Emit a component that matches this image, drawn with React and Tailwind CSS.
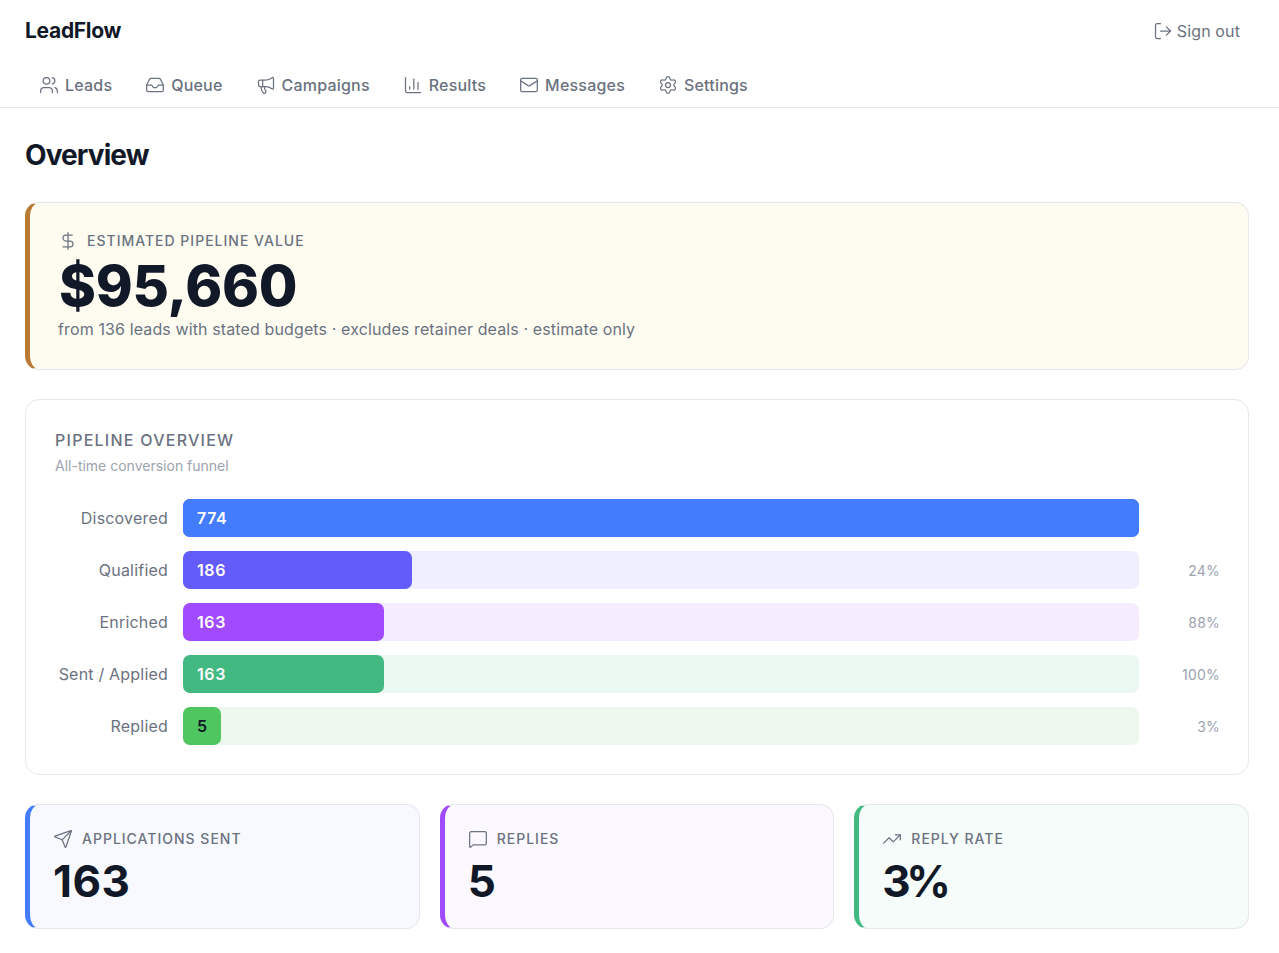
import { Users, Inbox, Megaphone, ChartColumn, Mail, Settings, LogOut, DollarSign, Send, MessageSquare, TrendingUp } from 'lucide-react'

const navItems = [
  { label: 'Leads', icon: Users },
  { label: 'Queue', icon: Inbox },
  { label: 'Campaigns', icon: Megaphone },
  { label: 'Results', icon: ChartColumn },
  { label: 'Messages', icon: Mail },
  { label: 'Settings', icon: Settings },
]

const funnel = [
  { label: 'Discovered', value: 774, width: '100%', pct: '', bar: 'bg-[#447cfe]', track: 'bg-[#447cfe]', text: 'text-white' },
  { label: 'Qualified', value: 186, width: '24%', pct: '24%', bar: 'bg-[#635bfa]', track: 'bg-[#f0effd]', text: 'text-white' },
  { label: 'Enriched', value: 163, width: '21.06%', pct: '88%', bar: 'bg-[#a04bff]', track: 'bg-[#f5ecfe]', text: 'text-white' },
  { label: 'Sent / Applied', value: 163, width: '21.06%', pct: '100%', bar: 'bg-[#43b982]', track: 'bg-[#ebf8f2]', text: 'text-white' },
  { label: 'Replied', value: 5, width: '38px', pct: '3%', bar: 'bg-[#4fc660]', track: 'bg-[#ecf8ee]', text: 'text-[#111827]' },
]

const stats = [
  { label: 'Applications sent', value: '163', icon: Send, bg: 'bg-[#f8f9ff]', accent: 'border-l-[#447cfe]', tracking: 'tracking-[0.5px]' },
  { label: 'Replies', value: '5', icon: MessageSquare, bg: 'bg-[#fbf9ff]', accent: 'border-l-[#a04bff]', tracking: '' },
  { label: 'Reply rate', value: '3%', icon: TrendingUp, bg: 'bg-[#f6fcf9]', accent: 'border-l-[#43b982]', tracking: 'tracking-[-4.5px]' },
]

export default function App() {
  return (
    <div className="min-h-screen bg-white font-['Inter',sans-serif] text-[#111827]">
      <header className="border-b border-[#e5e7eb]">
        <div className="flex items-center justify-between pl-[25px] pr-[30px] h-[62px]">
          <h1 className="text-[21px] font-bold tracking-[-0.3px]">LeadFlow</h1>
          <button className="flex items-center gap-[4px] px-[9px] text-[16px] tracking-[0.12px] text-[#6b7280]">
            <LogOut size={20} strokeWidth={1.5} />
            Sign out
          </button>
        </div>
        <nav className="flex gap-[5px] pl-[25px] h-[45px]">
          {navItems.map(({ label, icon: Icon }) => (
            <a key={label} className="flex items-center gap-[6px] px-[14px] text-[16px] font-medium tracking-[0.2px] text-[#6b7280]">
              <Icon size={20} strokeWidth={1.5} />
              {label}
            </a>
          ))}
        </nav>
      </header>

      <main className="pl-[25px] pr-[30px] pt-[28px]">
        <h2 className="text-[28px] leading-[38px] font-bold tracking-[-0.9px] mb-[28px]">Overview</h2>

        {/* Pipeline value */}
        <section className="h-[168px] rounded-[14px] border border-[#e5e7eb] border-l-[5px] border-l-[#b97a33] bg-[#fefcf1] pl-[28px] pt-[27px] mb-[29px]">
          <div className="flex items-center gap-[9px] text-[14px] font-medium tracking-[1px] uppercase text-[#6b7280]">
            <DollarSign size={20} strokeWidth={1.5} />
            Estimated pipeline value
          </div>
          <div className="text-[56px] leading-[60px] font-extrabold tracking-[-0.3px] pl-[1px] mt-[5px]">$95,660</div>
          <p className="text-[16px] leading-[24px] tracking-[0.12px] text-[#6b7280] mt-[1px]">from 136 leads with stated budgets · excludes retainer deals · estimate only</p>
        </section>

        {/* Funnel */}
        <section className="rounded-[14px] border border-[#e5e7eb] pl-[29px] pr-[28px] pt-[29px] pb-[29px] mb-[29px]">
          <h3 className="text-[16px] leading-[22px] font-medium tracking-[1.25px] uppercase text-[#6b7280]">Pipeline overview</h3>
          <p className="text-[14px] leading-[20px] text-[#9ca3af] mt-[5px] mb-[23px]">All-time conversion funnel</p>
          <div className="flex flex-col gap-[14px]">
            {funnel.map((row) => (
              <div key={row.label} className="flex items-center">
                <span className="w-[113px] text-right text-[16px] tracking-[0.2px] whitespace-nowrap text-[#6b7280]">{row.label}</span>
                <div className={`ml-[15px] flex-1 h-[38px] rounded-[7px] ${row.track}`}>
                  <div className={`h-full rounded-[7px] flex items-center pl-[14px] text-[16px] font-semibold tracking-[0.6px] ${row.bar} ${row.text}`} style={{ width: row.width }}>
                    {row.value}
                  </div>
                </div>
                <span className="w-[81px] text-right text-[14px] tracking-[0.2px] text-[#9ca3af]">{row.pct}</span>
              </div>
            ))}
          </div>
        </section>

        {/* Stats */}
        <section className="grid grid-cols-3 gap-5">
          {stats.map(({ label, value, icon: Icon, bg, accent, tracking }) => (
            <div key={label} className={`h-[125px] rounded-[14px] border border-[#e5e7eb] border-l-[5px] ${accent} ${bg} pl-[23px] pt-[23px]`}>
              <div className="flex items-center gap-[9px] text-[14px] font-medium tracking-[1px] uppercase text-[#6b7280]">
                <Icon size={20} strokeWidth={1.5} />
                {label}
              </div>
              <div className={`text-[44px] leading-[52px] font-bold mt-[6px] ${tracking}`}>{value}</div>
            </div>
          ))}
        </section>
      </main>
    </div>
  )
}
